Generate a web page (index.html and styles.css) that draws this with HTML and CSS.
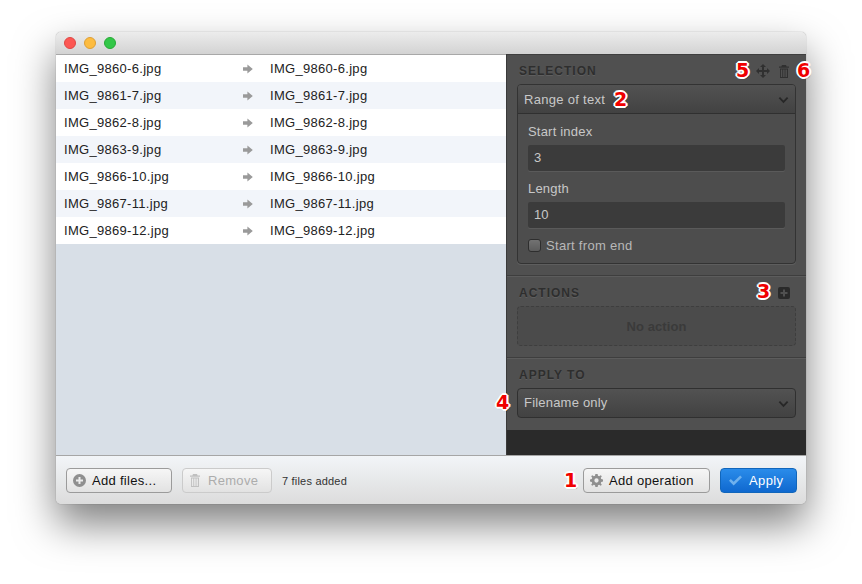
FILE: index.html
```html
<!DOCTYPE html>
<html lang="en">
<head>
<title>Rename files</title>
<meta charset="utf-8">
<meta name="viewport" content="width=device-width, initial-scale=1">
<link rel="stylesheet" href="styles.css">
</head>
<body>

<div class="window">
  <header class="titlebar">
    <span class="light red"></span>
    <span class="light yellow"></span>
    <span class="light green"></span>
  </header>

  <section class="main">
    <div class="files">
      <div class="row"><span class="name">IMG_9860-6.jpg</span><svg class="arrow" viewBox="0 0 10 10"><path d="M0 3.200h4.400V.5L9.800 5 4.400 9.500V6.800H0z"/></svg><span>IMG_9860-6.jpg</span></div>
      <div class="row"><span class="name">IMG_9861-7.jpg</span><svg class="arrow" viewBox="0 0 10 10"><path d="M0 3.200h4.400V.5L9.800 5 4.400 9.500V6.800H0z"/></svg><span>IMG_9861-7.jpg</span></div>
      <div class="row"><span class="name">IMG_9862-8.jpg</span><svg class="arrow" viewBox="0 0 10 10"><path d="M0 3.200h4.400V.5L9.800 5 4.400 9.500V6.800H0z"/></svg><span>IMG_9862-8.jpg</span></div>
      <div class="row"><span class="name">IMG_9863-9.jpg</span><svg class="arrow" viewBox="0 0 10 10"><path d="M0 3.200h4.400V.5L9.800 5 4.400 9.500V6.800H0z"/></svg><span>IMG_9863-9.jpg</span></div>
      <div class="row"><span class="name">IMG_9866-10.jpg</span><svg class="arrow" viewBox="0 0 10 10"><path d="M0 3.200h4.400V.5L9.800 5 4.400 9.500V6.800H0z"/></svg><span>IMG_9866-10.jpg</span></div>
      <div class="row"><span class="name">IMG_9867-11.jpg</span><svg class="arrow" viewBox="0 0 10 10"><path d="M0 3.200h4.400V.5L9.800 5 4.400 9.500V6.800H0z"/></svg><span>IMG_9867-11.jpg</span></div>
      <div class="row"><span class="name">IMG_9869-12.jpg</span><svg class="arrow" viewBox="0 0 10 10"><path d="M0 3.200h4.400V.5L9.800 5 4.400 9.500V6.800H0z"/></svg><span>IMG_9869-12.jpg</span></div>
    </div>

    <aside class="side">
      <div class="panel">
        <div class="panel-head">
          <h3>SELECTION</h3>
          <svg class="tool move" viewBox="0 0 14 14"><path d="M7 0l3 3H8v3h3V4l3 3-3 3V8H8v3h2l-3 3-3-3h2V8H3v2L0 7l3-3v2h3V3H4z"/></svg>
          <svg class="tool trash" viewBox="0 0 12 13"><path d="M4 0h4l.6 1.500H11v1.200H1V1.500h2.400zM2 3.400h8V13H2zm.9 1.200v7.300h1.400V4.600zm2.300 0v7.300h1.400V4.600zm2.300 0v7.300h1.400V4.600z" fill-rule="evenodd"/></svg>
        </div>
        <div class="box">
          <div class="select flush">Range of text<svg class="chev" viewBox="0 0 12 8"><path d="M1.500 1.500L6 6l4.500-4.500" /></svg></div>
          <div class="box-body">
            <label>Start index</label>
            <div class="field">3</div>
            <label>Length</label>
            <div class="field">10</div>
            <div class="check"><span class="tick"></span>Start from end</div>
          </div>
        </div>
      </div>

      <div class="panel">
        <div class="panel-head">
          <h3>ACTIONS</h3>
          <svg class="tool plus" viewBox="0 0 12 12"><path d="M2 0h8a2 2 0 0 1 2 2v8a2 2 0 0 1-2 2H2a2 2 0 0 1-2-2V2a2 2 0 0 1 2-2zm3 2.500V5H2.500v2H5v2.500h2V7h2.500V5H7V2.500z" fill-rule="evenodd"/></svg>
        </div>
        <div class="empty">No action</div>
      </div>

      <div class="panel last">
        <div class="panel-head"><h3>APPLY TO</h3></div>
        <div class="select">Filename only<svg class="chev" viewBox="0 0 12 8"><path d="M1.500 1.500L6 6l4.500-4.500" /></svg></div>
      </div>

      <div class="side-rest"></div>
    </aside>
  </section>

  <footer class="bottom">
    <button class="btn add"><svg class="ico" viewBox="0 0 13 13"><path d="M6.500 0a6.500 6.500 0 1 1 0 13 6.500 6.500 0 0 1 0-13zM5.500 3v2.500H3v2h2.500V10h2V7.500H10v-2H7.500V3z" fill-rule="evenodd"/></svg>Add files...</button>
    <button class="btn remove"><svg class="ico" viewBox="0 0 12 13"><path d="M4 0h4l.6 1.500H11v1.200H1V1.500h2.400zM2 3.400h8V13H2zm.9 1.200v7.300h1.400V4.600zm2.300 0v7.300h1.400V4.600zm2.300 0v7.300h1.400V4.600z" fill-rule="evenodd"/></svg>Remove</button>
    <span class="count">7 files added</span>
    <span class="spacer"></span>
    <button class="btn oper"><svg class="ico" viewBox="0 0 14 14"><path d="M5.800 0h2.400l.4 1.900 1.300.5L11.600 1.300l1.100 1.100-1.100 1.700.5 1.300 1.900.4v2.400l-1.900.4-.5 1.300 1.100 1.700-1.100 1.100-1.700-1.100-1.300.5-.4 1.900H5.800l-.4-1.900-1.300-.5-1.700 1.100-1.100-1.100 1.100-1.700-.5-1.300L0 8.200V5.800l1.900-.4.500-1.300-1.100-1.700 1.100-1.100 1.700 1.100 1.300-.5zM7 4.700a2.300 2.300 0 1 0 0 4.600 2.300 2.300 0 0 0 0-4.600z" fill-rule="evenodd"/></svg>Add operation</button>
    <button class="btn apply"><svg class="ico" viewBox="0 0 14 11"><path d="M0 5.800l2-2 3 3L12 0l2 2-9 9z"/></svg>Apply</button>
  </footer>

  <!-- callout numbers drawn over the screenshot -->
  <span class="mark m1">1</span>
  <span class="mark m2">2</span>
  <span class="mark m3">3</span>
  <span class="mark m4">4</span>
  <span class="mark m5">5</span>
  <span class="mark m6">6</span>
</div>

</body>
</html>
```

FILE: styles.css
```css
* {
  box-sizing: border-box;
}

html, body {
  margin: 0;
  height: 100%;
  overflow: hidden;
}

body {
  background: #fff;
  font-family: "Liberation Sans", Arial, sans-serif;
  font-size: 13px;
  color: #222;
}

.window {
  position: relative;
  display: flex;
  flex-direction: column;
  width: 750px;
  height: 472px;
  margin: 32px 0 0 56px;
  border-radius: 5px;
  background: #e8e8e8;
  box-shadow: 0 0 1px rgba(0,0,0,.5), 0 20px 40px rgba(0,0,0,.5);
}

/* Title bar */
.titlebar {
  display: flex;
  align-items: center;
  gap: 8px;
  height: 23px;
  padding: 0 0 1px 8px;
  border-radius: 5px 5px 0 0;
  border-bottom: 1px solid #a8a8a8;
  background: linear-gradient(#ececec, #d3d3d3);
}

.light {
  width: 12px;
  height: 12px;
  border-radius: 50%;
}
.red { background: #fc5753; border: 1px solid #df4744; }
.yellow { background: #fdbc40; border: 1px solid #de9f34; }
.green { background: #33c748; border: 1px solid #27aa35; }

.main {
  display: flex;
  height: 400px;
}

/* File list */
.files {
  width: 450px;
  background: #d8dfe7;
}

.row {
  display: flex;
  align-items: center;
  height: 27px;
  padding-left: 8px;
  font-size: 13px;
  letter-spacing: .3px;
  background: #fff;
}
.row:nth-child(even) {
  background: #f2f5fa;
}
.name {
  width: 179px;
}
.arrow {
  width: 10px;
  height: 10px;
  margin-right: 17px;
  fill: #9a9a9a;
}

/* Right panel */
.side {
  display: flex;
  flex-direction: column;
  width: 300px;
  background: #505050;
  border-left: 1px solid #3a3a3a;
  border-top: 1px solid #3f3f3f;
  margin-top: -1px;
  color: #c8c8c8;
}

.panel {
  padding: 10px 10px 11px;
  border-bottom: 1px solid #3e3e3e;
  box-shadow: 0 1px 0 #5c5c5c;
}
.panel:first-child {
  padding-top: 9px;
}
.panel.last {
  padding-bottom: 12px;
  border-bottom: 0;
  box-shadow: none;
}

.panel-head {
  display: flex;
  align-items: center;
  height: 14px;
  margin-bottom: 6px;
  padding-left: 2px;
}
.panel-head h3 {
  flex: 1;
  margin: 0;
  font-size: 12px;
  font-weight: bold;
  letter-spacing: 1px;
  color: #2e2e2e;
  text-shadow: 0 1px 0 #5e5e5e;
}

.tool {
  fill: #303030;
}
.move {
  width: 14px;
  height: 14px;
  margin-right: 8px;
}
.trash {
  width: 12px;
  height: 13px;
  margin-right: 6px;
}
.plus {
  width: 12px;
  height: 12px;
  margin-right: 6px;
  fill: #2a2a2a;
}

.box {
  height: 180px;
  border: 1px solid #333;
  border-radius: 4px;
  background: #4d4d4d;
  box-shadow: 0 1px 0 #5e5e5e;
}

.select {
  position: relative;
  display: flex;
  align-items: center;
  height: 30px;
  padding: 0 0 2px 6px;
  border: 1px solid #303030;
  border-radius: 4px;
  background: linear-gradient(#525252, #424242);
  font-size: 13px;
  letter-spacing: .2px;
  color: #c8c8c8;
}
.select.flush {
  height: 29px;
  padding-bottom: 0;
  border: 0;
  border-bottom: 1px solid #303030;
  border-radius: 3px 3px 0 0;
  letter-spacing: .3px;
}

.chev {
  position: absolute;
  right: 6px;
  top: 50%;
  width: 11px;
  height: 8px;
  margin-top: -3px;
  fill: none;
  stroke: #272727;
  stroke-width: 2;
}

.box-body {
  padding: 11px 10px 0;
}
.box-body label {
  display: block;
  height: 14px;
  line-height: 14px;
  margin-bottom: 6px;
  font-size: 13px;
  letter-spacing: .2px;
  color: #c8c8c8;
}

.field {
  height: 26px;
  line-height: 26px;
  margin-bottom: 11px;
  padding-left: 6px;
  border-radius: 2px;
  background: #3b3b3b;
  box-shadow: 0 1px 0 #5a5a5a;
  font-size: 13px;
  color: #c8c8c8;
}

.check {
  display: flex;
  align-items: center;
  gap: 5px;
  height: 14px;
  margin-top: -1px;
  font-size: 13px;
  letter-spacing: .3px;
  color: #b8b8b8;
}
.tick {
  width: 13px;
  height: 13px;
  border: 1px solid #2e2e2e;
  border-radius: 3px;
  background: linear-gradient(#727272, #5c5c5c);
}

.empty {
  display: flex;
  align-items: center;
  justify-content: center;
  height: 40px;
  border: 1px dashed #3e3e3e;
  border-radius: 4px;
  background: #4b4b4b;
  font-size: 13px;
  font-weight: bold;
  letter-spacing: .1px;
  color: #3a3a3a;
}

.side-rest {
  flex: 1;
  background: #2a2a2a;
}

/* Bottom bar */
.bottom {
  display: flex;
  align-items: center;
  height: 49px;
  padding: 1px 9px 0 10px;
  border-top: 1px solid #a6a6a6;
  border-radius: 0 0 5px 5px;
  background: linear-gradient(#f2f5f8, #dcdcdc);
}

.btn {
  display: flex;
  align-items: center;
  height: 25px;
  padding: 0 0 0 6px;
  border: 1px solid #9b9b9b;
  border-radius: 4px;
  background: linear-gradient(#f6f6f6, #e2e2e2);
  font-family: inherit;
  font-size: 13px;
  letter-spacing: .3px;
  color: #111;
}
.ico {
  flex: none;
  width: 13px;
  height: 13px;
  margin-right: 6px;
  fill: #8f8f8f;
}
.add {
  width: 106px;
}
.remove {
  width: 90px;
  margin-left: 10px;
  border-color: #cbcbcb;
  color: #acacac;
}
.remove .ico {
  width: 12px;
  margin-right: 7px;
  fill: #c0c0c0;
}
.count {
  margin-left: 10px;
  font-size: 11px;
  letter-spacing: .2px;
  color: #333;
}
.spacer {
  flex: 1;
}
.oper {
  width: 127px;
}
.apply {
  justify-content: flex-start;
  width: 77px;
  margin-left: 10px;
  padding-left: 8px;
  border-color: #1166bb;
  background: linear-gradient(#2a8cea, #0f68cf);
  letter-spacing: .4px;
  color: #fff;
}
.apply .ico {
  height: 11px;
  margin-right: 7px;
  fill: #6fb1ee;
}

/* Red callout numbers */
.mark {
  position: absolute;
  font-family: "DejaVu Sans", sans-serif;
  font-size: 19px;
  font-weight: bold;
  line-height: 20px;
  color: #f00000;
  text-shadow:
    -2px 0 0 #fff, 2px 0 0 #fff, 0 -2px 0 #fff, 0 2px 0 #fff,
    -1px -1px 0 #fff, 1px -1px 0 #fff, -1px 1px 0 #fff, 1px 1px 0 #fff,
    1px 2px 1px rgba(0,0,0,.3);
}
.m1 { left: 508px; top: 438px; }
.m2 { left: 558px; top: 57px; }
.m3 { left: 701px; top: 249px; }
.m4 { left: 440px; top: 360px; }
.m5 { left: 680px; top: 28px; }
.m6 { left: 741px; top: 28px; }
```
